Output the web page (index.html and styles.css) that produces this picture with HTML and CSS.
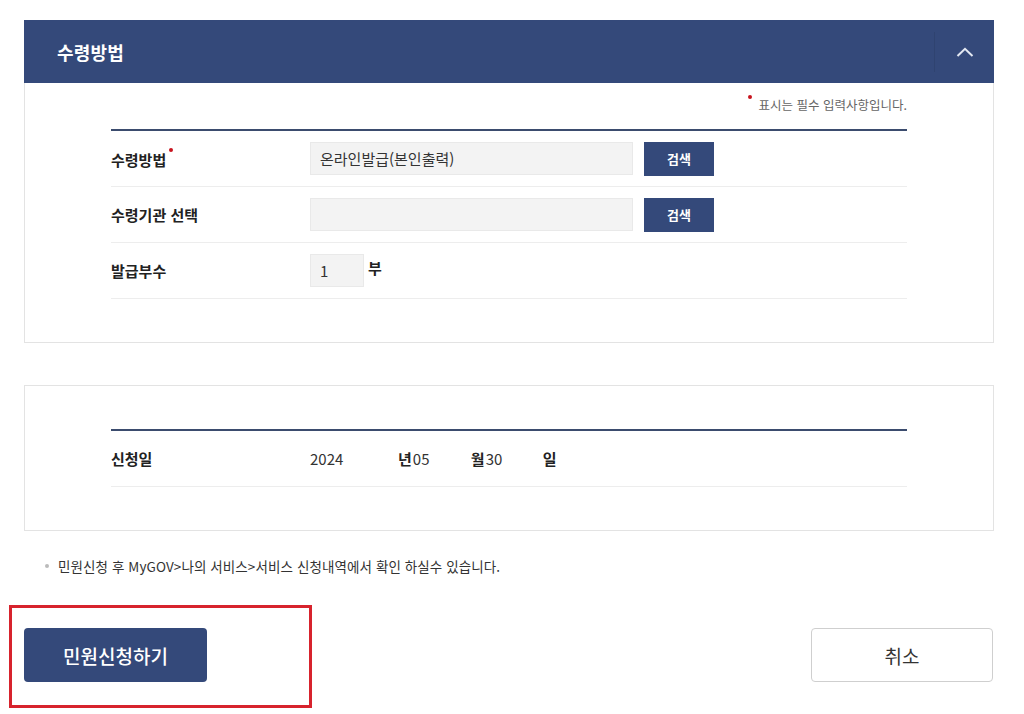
FILE: index.html
```html
<!DOCTYPE html>
<html lang="ko">
<head>
  <meta charset="UTF-8">
  <title>수령방법</title>
  <link rel="stylesheet" href="styles.css">
</head>
<body>
  <div class="wrap">
    <section class="panel">
      <div class="panel-head">
        <h2>수령방법</h2>
        <button class="toggle" type="button" aria-label="접기">
          <svg width="18" height="10" viewBox="0 0 18 10"><polyline points="1.5,9 9,1.8 16.5,9" fill="none" stroke="#e3e8f2" stroke-width="2"/></svg>
        </button>
      </div>
      <div class="panel-body">
        <p class="req-note"><span class="req"></span>표시는 필수 입력사항입니다.</p>
        <div class="form-table">
          <div class="row">
            <div class="label">수령방법<span class="req req-label"></span></div>
            <div class="field">
              <div class="input wide">온라인발급(본인출력)</div>
              <button class="btn-search" type="button">검색</button>
            </div>
          </div>
          <div class="row">
            <div class="label">수령기관 선택</div>
            <div class="field">
              <div class="input wide"></div>
              <button class="btn-search" type="button">검색</button>
            </div>
          </div>
          <div class="row">
            <div class="label">발급부수</div>
            <div class="field">
              <div class="input small">1</div>
              <span class="unit">부</span>
            </div>
          </div>
        </div>
      </div>
    </section>

    <section class="panel panel-plain">
      <div class="form-table">
        <div class="row">
          <div class="label">신청일</div>
          <div class="field date">
            <span class="val year">2024</span><b>년</b><span class="val month">05</span><b>월</b><span class="val day">30</span><b>일</b>
          </div>
        </div>
      </div>
    </section>

    <p class="info">민원신청 후 MyGOV&gt;나의 서비스&gt;서비스 신청내역에서 확인 하실수 있습니다.</p>

    <div class="actions">
      <span class="highlight"></span>
      <button class="btn-submit" type="button">민원신청하기</button>
      <button class="btn-cancel" type="button">취소</button>
    </div>
  </div>
</body>
</html>
```

FILE: styles.css
```css
body {
  margin: 0;
  background: #fff;
  font-family: "Noto Sans CJK KR", "Noto Sans", sans-serif;
  color: #222;
}
.wrap { width: 970px; margin: 20px 0 0 24px; padding-bottom: 40px; }

.panel { border: 1px solid #e3e3e3; border-top: 0; }
.panel-head {
  display: flex;
  align-items: center;
  height: 63px;
  margin: 0 -1px;
  background: #34497a;
}
.panel-head h2 {
  flex: 1;
  margin: 0;
  padding-left: 33px;
  font-size: 18px;
  font-weight: 700;
  color: #fff;
  letter-spacing: 0.2px;
}
.toggle {
  width: 60px;
  height: 40px;
  padding: 0;
  border: 0;
  border-left: 1px solid #2f4370;
  background: transparent;
  cursor: pointer;
}
.toggle svg { display: block; margin: 0 auto; }

.panel-body { padding: 12px 86px 43px; }
.req-note {
  margin: 0 0 15px;
  text-align: right;
  font-size: 12.5px;
  line-height: 18px;
  color: #666;
}
.req {
  display: inline-block;
  width: 4px;
  height: 4px;
  margin-right: 7px;
  border-radius: 50%;
  background: #c8141e;
  vertical-align: 11px;
}
.req-label { margin: 0 0 0 3px; vertical-align: 14px; }

.form-table { border-top: 2px solid #3b4c6e; }
.row {
  display: flex;
  align-items: center;
  height: 55px;
  border-bottom: 1px solid #ededed;
}
.label {
  width: 199px;
  font-size: 15px;
  font-weight: 700;
  color: #222;
}
.field { display: flex; align-items: center; }
.input {
  box-sizing: border-box;
  height: 33px;
  padding: 0 9px;
  background: #f3f3f3;
  border: 1px solid #e9e9e9;
  font-size: 15px;
  line-height: 31px;
  color: #333;
}
.input.wide { width: 323px; }
.input.small { width: 54px; }
.btn-search {
  width: 70px;
  height: 34px;
  margin-left: 11px;
  border: 0;
  background: #34497a;
  color: #fff;
  font-family: inherit;
  font-size: 13px;
  font-weight: 700;
  cursor: pointer;
}
.unit { margin: -6px 0 0 4px; font-size: 15px; font-weight: 700; }

.panel-plain { border-top: 1px solid #e3e3e3; margin-top: 42px; padding: 43px 86px 43px; }
.date { font-size: 15px; color: #333; }
.date b { color: #222; font-weight: 700; }
.val { display: inline-block; }
.val.year { width: 88px; }
.val.month { width: 58px; padding-left: 1px; }
.val.day { width: 57px; padding-left: 1px; }

.info {
  position: relative;
  margin: 26px 0 0;
  padding-left: 34px;
  font-size: 13.5px;
  line-height: 18px;
  color: #333;
  letter-spacing: 0.1px;
}
.info::before {
  content: "";
  position: absolute;
  left: 21px;
  top: 7px;
  width: 4px;
  height: 4px;
  border-radius: 50%;
  background: #bbb;
}

.actions {
  position: relative;
  display: flex;
  justify-content: space-between;
  margin-top: 53px;
}
.btn-submit, .btn-cancel {
  height: 54px;
  border-radius: 4px;
  font-family: inherit;
  font-size: 19px;
  cursor: pointer;
}
.btn-submit {
  width: 183px;
  border: 0;
  background: #34497a;
  color: #fff;
  font-weight: 500;
}
.btn-cancel {
  width: 182px;
  margin-right: 1px;
  border: 1px solid #cfcfcf;
  background: #fff;
  color: #333;
}
.highlight {
  position: absolute;
  left: -15px;
  top: -23px;
  width: 297px;
  height: 97px;
  border: 3px solid #d7232d;
  pointer-events: none;
}
```
